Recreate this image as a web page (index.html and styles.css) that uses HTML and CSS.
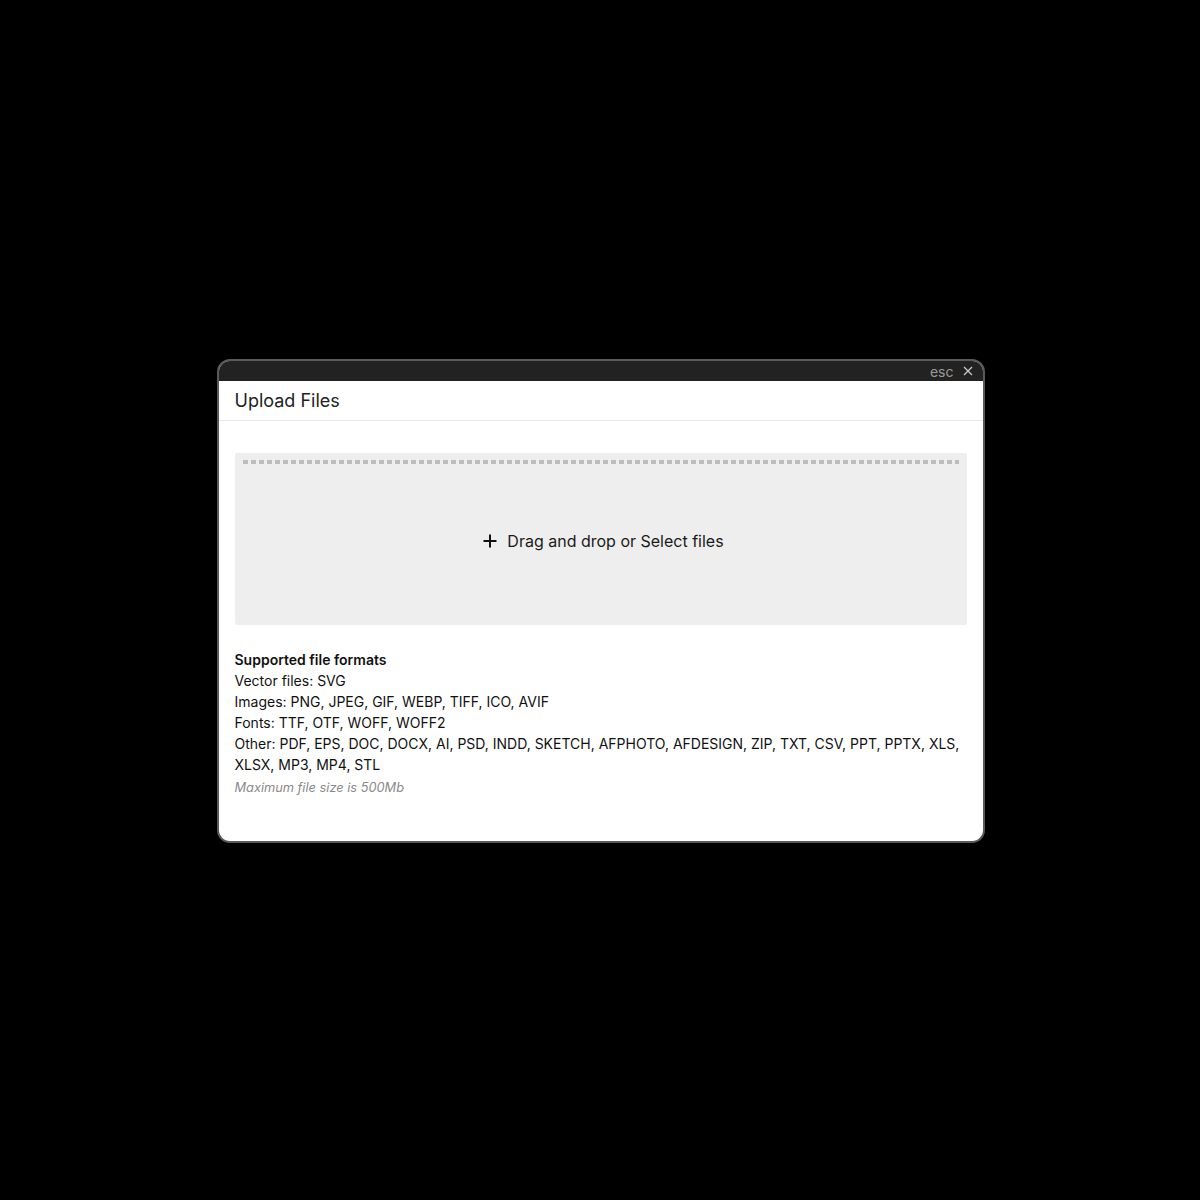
FILE: index.html
```html
<!DOCTYPE html>
<html lang="en">
  <head>
    <meta charset="UTF-8" />
    <title>Upload Files</title>
    <link rel="stylesheet" href="styles.css">
  </head>

  <body>
    <div class="dialog">
      <div class="titlebar">
        <span class="esc">esc</span>
        <svg class="close" width="10" height="10" viewBox="0 0 10 10">
          <path d="M1 1l8 8M9 1l-8 8" stroke="#c8c8c8" stroke-width="1.3" fill="none" />
        </svg>
      </div>
      <!--Titlebar end-->

      <div class="header">Upload Files</div>

      <div class="content">
        <div class="dropzone">
          <div class="dashes"></div>
          <div class="droplabel">
            <svg class="plus" width="14" height="14" viewBox="0 0 14 14">
              <path d="M7 0.5v13M0.5 7h13" stroke="#111" stroke-width="2" fill="none" />
            </svg>
            <span>Drag and drop or Select files</span>
          </div>
        </div>
        <!--Dropzone end-->

        <div class="formats">
          <div class="formats-title">Supported file formats</div>
          <div>Vector files: SVG</div>
          <div>Images: PNG, JPEG, GIF, WEBP, TIFF, ICO, AVIF</div>
          <div>Fonts: TTF, OTF, WOFF, WOFF2</div>
          <div>Other: PDF, EPS, DOC, DOCX, AI, PSD, INDD, SKETCH, AFPHOTO, AFDESIGN, ZIP, TXT, CSV, PPT, PPTX, XLS, XLSX, MP3, MP4, STL</div>
          <div class="note">Maximum file size is 500Mb</div>
        </div>
      </div>
    </div>
    <!--Dialog end-->
  </body>
</html>
```

FILE: styles.css
```css
html,
body {
  margin: 0;
  padding: 0;
  background: #000;
  font-family: Inter, "Noto Sans", sans-serif;
}

body {
  display: flex;
  align-items: center;
  justify-content: center;
  height: 100vh;
}

.dialog {
  width: 768px;
  box-sizing: border-box;
  border: 2px solid #5a5a5a;
  border-radius: 13px;
  background: #fff;
  overflow: hidden;
  margin: 2px 0 0 1px;
}

.titlebar {
  height: 20px;
  background: #222;
  display: flex;
  align-items: center;
  justify-content: flex-end;
  padding-right: 10px;
  color: #9a9a9a;
}

.esc {
  font-size: 14px;
  margin-right: 9px;
}

.close {
  display: block;
}

.header {
  font-size: 18px;
  line-height: 21px;
  padding: 9px 16px;
  color: #222;
  border-bottom: 1px solid #e8e8e8;
}

.content {
  padding: 32px 16px 44px;
}

.dropzone {
  height: 172px;
  background: #eee;
  border-radius: 2px;
  padding: 7px 8px 0;
  box-sizing: border-box;
  display: flex;
  flex-direction: column;
}

.dashes {
  height: 4px;
  background: repeating-linear-gradient(to right, #bdbdbd 0 5px, transparent 5px 8px);
}

.droplabel {
  flex: 1;
  display: flex;
  align-items: center;
  justify-content: center;
  gap: 10px;
  font-size: 16px;
  color: #1a1a1a;
  padding: 0 0 7px 6px;
}

.plus {
  display: block;
}

.formats {
  margin-top: 24px;
  font-size: 14px;
  line-height: 21px;
  color: #111;
}

.formats-title {
  font-weight: 600;
}

.note {
  font-size: 12.8px;
  font-style: italic;
  color: #8a8a8a;
  line-height: 18px;
  margin-top: 4px;
}
```
